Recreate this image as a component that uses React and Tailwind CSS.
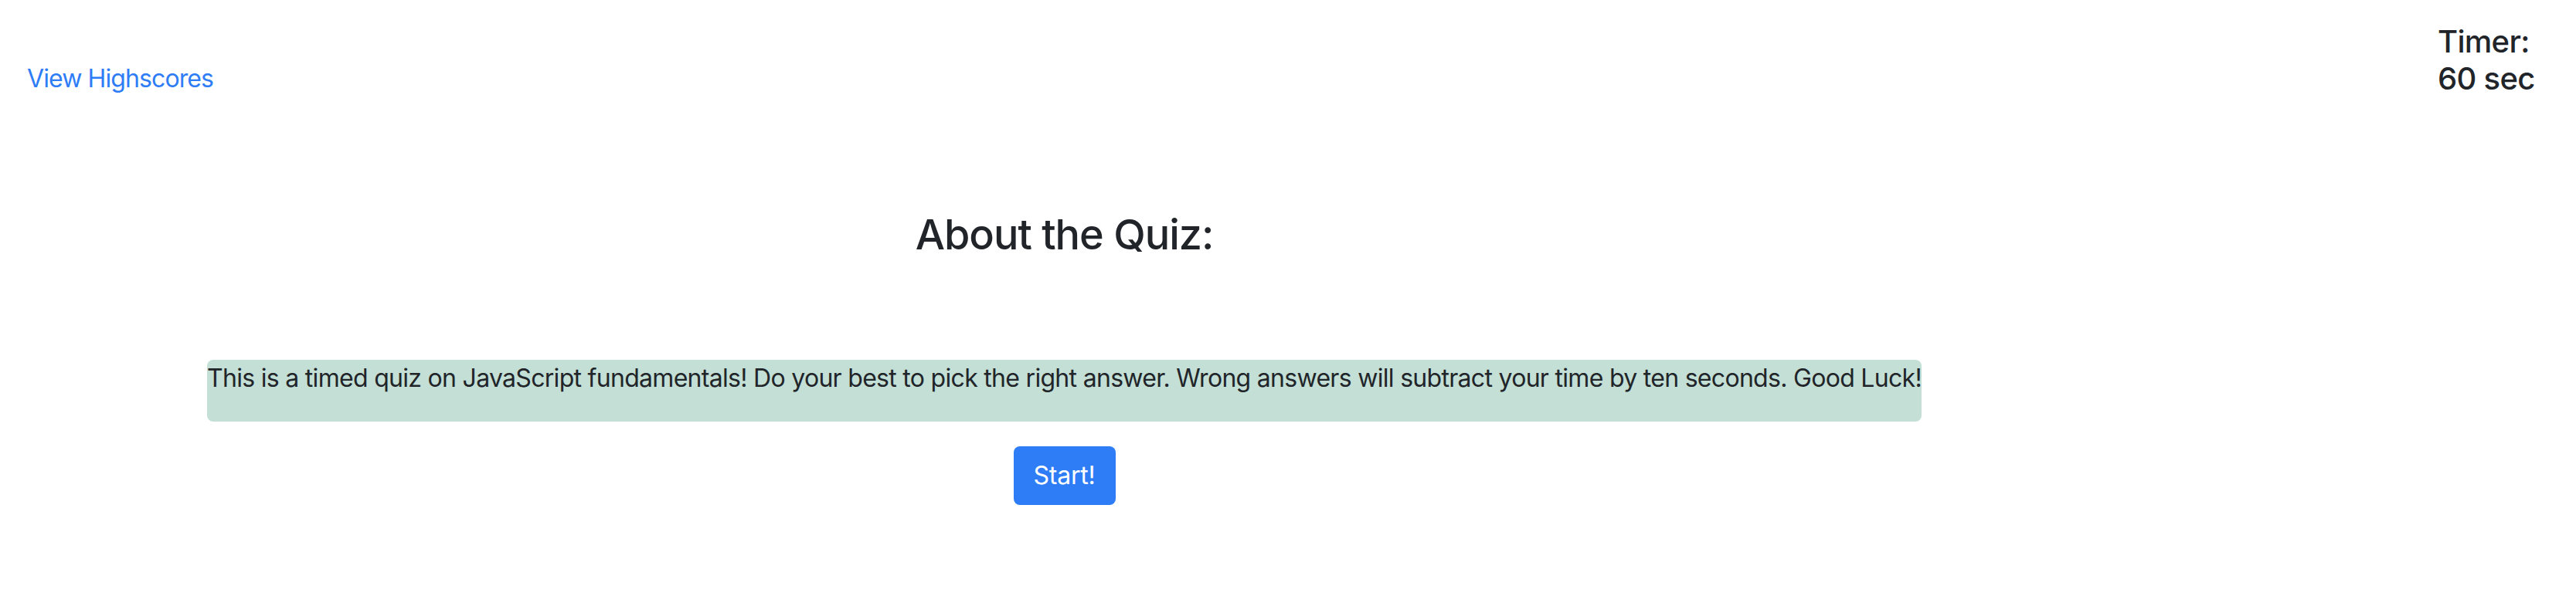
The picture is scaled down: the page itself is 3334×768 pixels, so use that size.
export default function App() {
  return (
    <div className="min-h-[768px] bg-white text-[#212529] font-['Inter','Liberation_Sans',sans-serif]">
      <header className="flex items-end justify-between pt-[30px] pl-[35px]">
        <a href="#" className="text-[32px] leading-[48px] tracking-[-0.9px] text-[#2f7df6]">
          View Highscores
        </a>
        <div className="w-[179px] text-[40px] leading-[48px] tracking-[-0.7px] font-medium">
          Timer:
          <br />
          60 sec
        </div>
      </header>
      <main className="ml-[268px] w-[2219px] flex flex-col items-center">
        <h3 className="mt-[145px] text-[54px] leading-[65px] tracking-[-1px] font-medium">About the Quiz:</h3>
        <p className="mt-[130px] w-full whitespace-nowrap rounded-[8px] bg-[#c3dfd6] pb-[32px] text-[32px] leading-[48px] tracking-[-0.7px]">
          This is a timed quiz on JavaScript fundamentals! Do your best to pick the right answer. Wrong answers will subtract your time by ten seconds. Good Luck!
        </p>
        <button className="mt-[32px] h-[76px] w-[132px] rounded-[8px] bg-[#2f7df6] text-[32px] leading-[48px] tracking-[-0.2px] text-white">
          Start!
        </button>
      </main>
    </div>
  );
}
